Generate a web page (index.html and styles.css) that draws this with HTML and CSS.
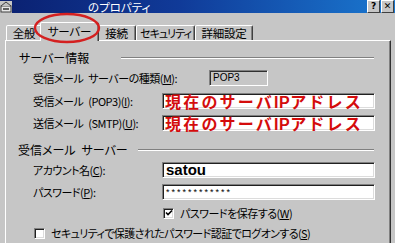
FILE: index.html
```html
<!DOCTYPE html>
<html lang="ja">
<head>
<meta charset="utf-8">
<link rel="stylesheet" href="styles.css">
</head>
<body>
<div class="window">
  <div class="titlebar">
    <svg class="app-icon" width="12" height="12" viewBox="0 0 12 12">
      <rect x="1" y="5" width="10" height="6" fill="#e8e8e8" stroke="#404040" stroke-width="1"/>
      <path d="M1 5 L6 1 L11 5" fill="#c0c0c0" stroke="#404040" stroke-width="1"/>
      <rect x="3" y="7" width="6" height="2" fill="#606060"/>
    </svg>
    <span class="title-mask"></span>
    <span class="title-text">のプロパティ</span>
    <span class="spacer"></span>
    <span class="tb-btn">?</span>
    <span class="tb-btn">✕</span>
  </div>

  <div class="tabs">
    <div class="tab t1">全般</div>
    <div class="tab active">サーバー</div>
    <div class="tab t3">接続</div>
    <div class="tab t4">セキュリティ</div>
    <div class="tab t5">詳細設定</div>
  </div>

  <div class="panel">
    <div class="group-title g1">
      <span>サーバー情報</span>
      <span class="rule r1"></span>
    </div>
    <div class="row row-1">
      <span class="label">受信メール&ensp;サーバーの種類(<u>M</u>):</span>
      <span class="readonly">POP3</span>
    </div>
    <div class="row row-2">
      <span class="label">受信メール&ensp;(POP3)(<u>I</u>):</span>
      <span class="field red">現在のサーバ<b>IP</b>アドレス</span>
    </div>
    <div class="row row-3">
      <span class="label">送信メール&ensp;(SMTP)(<u>U</u>):</span>
      <span class="field red">現在のサーバ<b>IP</b>アドレス</span>
    </div>

    <div class="group-title g2">
      <span>受信メール&ensp;サーバー</span>
      <span class="rule r2"></span>
    </div>
    <div class="row row-4">
      <span class="label">アカウント名(<u>C</u>):</span>
      <span class="field user">satou</span>
    </div>
    <div class="row row-5">
      <span class="label">パスワード(<u>P</u>):</span>
      <span class="field pass">************</span>
    </div>
    <div class="check-row c1">
      <span class="box checked">
        <svg width="8" height="8" viewBox="0 0 8 8"><path d="M1 3.5 L3 5.5 L7 1.5" fill="none" stroke="#000" stroke-width="1.6"/></svg>
      </span>
      <span class="check-label">パスワードを保存する(<u>W</u>)</span>
    </div>
    <div class="check-row c2">
      <span class="box"></span>
      <span class="check-label">セキュリティで保護されたパスワード認証でログオンする(<u>S</u>)</span>
    </div>
  </div>

  <svg class="annotation" width="80" height="40" viewBox="0 0 80 40">
    <ellipse cx="40" cy="20" rx="32" ry="14" fill="none" stroke="#d42020" stroke-width="2.4"/>
  </svg>
</div>
</body>
</html>
```

FILE: styles.css
```css
* { box-sizing: border-box; }
html, body { margin: 0; padding: 0; }
body {
  width: 395px;
  height: 243px;
  overflow: hidden;
  font-family: "Noto Sans CJK JP", "Noto Sans", sans-serif;
  font-size: 11px;
  letter-spacing: -0.5px;
  font-feature-settings: "palt";
  color: #000;
}
.window {
  position: relative;
  width: 395px;
  height: 243px;
  background: #c6c6c6;
  overflow: hidden;
}
.titlebar {
  height: 13px;
  display: flex;
  align-items: center;
  background: linear-gradient(90deg, #0a2070 0%, #103a98 45%, #1a78d0 100%);
}
.app-icon { flex: none; background: #c6c6c6; }
.title-mask { width: 76px; flex: none; }
.title-text {
  color: #fff;
  font-size: 11.5px;
  line-height: 14px;
  letter-spacing: 0;
  white-space: nowrap;
}
.spacer { flex: 1; }
.tb-btn {
  width: 13px;
  height: 13px;
  margin-right: 1px;
  background: #c6c6c6;
  border-style: solid;
  border-width: 1px;
  border-color: #fff #404040 #404040 #fff;
  font-family: "DejaVu Sans", sans-serif;
  font-weight: bold;
  font-size: 9px;
  letter-spacing: 0;
  line-height: 11px;
  text-align: center;
}
.tabs {
  display: flex;
  align-items: flex-end;
  height: 27px;
  padding-left: 6px;
  position: relative;
  z-index: 1;
  font-size: 11.5px;
  letter-spacing: -0.2px;
}
.tab {
  height: 15px;
  padding: 0;
  text-align: center;
  background: #c6c6c6;
  border-style: solid;
  border-width: 1px 1px 0 1px;
  border-color: #fff #404040 transparent #fff;
  border-radius: 2px 2px 0 0;
  box-shadow: inset -1px 0 #808080;
  line-height: 14px;
  white-space: nowrap;
  overflow: hidden;
}
.t1 { width: 36px; }
.t3 { width: 39px; }
.t4 { width: 59px; letter-spacing: -1px; font-size: 11px; }
.t5 { width: 58px; }
.tab.active {
  width: 59px;
  height: 19px;
  margin-bottom: -1px;
  margin-left: -2px;
  margin-right: -2px;
  padding-top: 1px;
  position: relative;
  z-index: 2;
}
.panel {
  margin-left: 5px;
  width: 386px;
  height: 210px;
  border-style: solid;
  border-width: 1px 1px 0 1px;
  border-color: #fff #303030 transparent #fff;
  box-shadow: inset -1px 0 #808080;
  padding: 11px 0 0 0;
  display: flex;
  flex-direction: column;
}
.group-title {
  height: 12px;
  display: flex;
  align-items: center;
  justify-content: space-between;
  padding-left: 13px;
  padding-right: 16px;
  font-size: 12px;
  letter-spacing: 0;
  line-height: 12px;
  white-space: nowrap;
}
.g2 { margin-top: 13px; padding-left: 12px; }
.rule {
  height: 2px;
  border-top: 1px solid #808080;
  border-bottom: 1px solid #fff;
}
.r1 { width: 253px; }
.r2 { width: 236px; }
.row {
  height: 16px;
  display: flex;
  align-items: center;
  padding-left: 27px;
  white-space: nowrap;
}
.row-1 { margin-top: 6px; }
.row-2 { margin-top: 7px; }
.row-3 { margin-top: 6px; }
.row-4 { margin-top: 6px; }
.row-5 { margin-top: 6px; }
.label {
  width: 129px;
  flex: none;
  line-height: 12px;
}
.row-1 .label { width: 176px; }
u { text-decoration: underline; text-underline-offset: 1px; }
.readonly {
  width: 59px;
  height: 16px;
  border-style: solid;
  border-width: 1px;
  border-color: #808080 #fff #fff #808080;
  box-shadow: inset 1px 1px #303030;
  font-family: "Liberation Sans", Arial, sans-serif;
  font-size: 10px;
  letter-spacing: 0;
  line-height: 14px;
  padding-left: 3px;
}
.field {
  width: 213px;
  height: 16px;
  flex: none;
  background: #fff;
  border-style: solid;
  border-width: 1px;
  border-color: #808080 #fff #fff #808080;
  box-shadow: inset 1px 1px #202020, inset -1px -1px #dcdcdc;
  padding-left: 2px;
  overflow: visible;
}
.red {
  color: #d40c0c;
  font-size: 16px;
  font-weight: bold;
  letter-spacing: 2.2px;
  line-height: 14px;
  font-feature-settings: normal;
}
.red b {
  font-family: "Liberation Sans", Arial, sans-serif;
  font-weight: bold;
  font-size: 16px;
  letter-spacing: 0.5px;
}
.user {
  font-family: "Liberation Sans", Arial, sans-serif;
  font-weight: bold;
  font-size: 15px;
  letter-spacing: 0;
  line-height: 14px;
  padding-left: 3px;
}
.pass {
  font-family: "Liberation Sans", Arial, sans-serif;
  font-size: 9px;
  line-height: 14px;
  letter-spacing: 2px;
  padding-left: 3px;
}
.check-row {
  height: 12px;
  display: flex;
  align-items: center;
  white-space: nowrap;
  line-height: 12px;
}
.c1 { margin-top: 7px; padding-left: 157px; }
.c2 { margin-top: 8px; padding-left: 28px; letter-spacing: -0.6px; }
.box {
  width: 11px;
  height: 11px;
  background: #fff;
  border-style: solid;
  border-width: 1px;
  border-color: #808080 #fff #fff #808080;
  box-shadow: inset 1px 1px #202020, inset -1px -1px #dcdcdc;
  display: flex;
  align-items: center;
  justify-content: center;
  margin-right: 6px;
  flex: none;
}
.annotation {
  position: absolute;
  left: 27px;
  top: 8px;
  z-index: 5;
}
```
